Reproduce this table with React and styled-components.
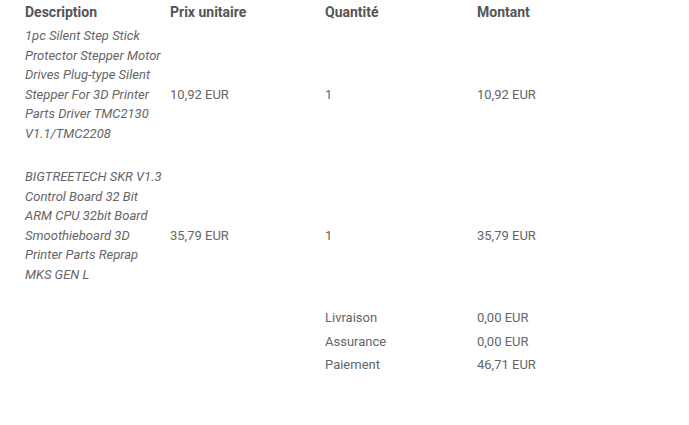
import React from 'react'
import styled, { createGlobalStyle } from 'styled-components'

const GlobalStyle = createGlobalStyle`
    body {
        margin: 0;
        background: #fff;
        font-family: Roboto, 'Liberation Sans', sans-serif;
    }
`

const items = [
    {
        description: '1pc Silent Step Stick Protector Stepper Motor Drives Plug-type Silent Stepper For 3D Printer Parts Driver TMC2130 V1.1/TMC2208',
        price: '10,92 EUR',
        qty: '1',
        total: '10,92 EUR',
    },
    {
        description: 'BIGTREETECH SKR V1.3 Control Board 32 Bit ARM CPU 32bit Board Smoothieboard 3D Printer Parts Reprap MKS GEN L',
        price: '35,79 EUR',
        qty: '1',
        total: '35,79 EUR',
    },
]

const totals = [
    { label: 'Livraison', value: '0,00 EUR' },
    { label: 'Assurance', value: '0,00 EUR' },
    { label: 'Paiement', value: '46,71 EUR' },
]

export default function App() {
    return (
        <>
            <GlobalStyle />
            <Wrapper>
                <Table>
                    <colgroup>
                        <col style={{ width: 145 }} />
                        <col style={{ width: 155 }} />
                        <col style={{ width: 152 }} />
                        <col />
                    </colgroup>
                    <thead>
                        <tr>
                            <Head>Description</Head>
                            <Head>Prix unitaire</Head>
                            <Head>Quantité</Head>
                            <Head>Montant</Head>
                        </tr>
                    </thead>
                    <tbody>
                        {items.map((item, i) => (
                            <tr key={i}>
                                <Cell>
                                    <Description>{item.description}</Description>
                                </Cell>
                                <Cell>{item.price}</Cell>
                                <Cell>{item.qty}</Cell>
                                <Cell>{item.total}</Cell>
                            </tr>
                        ))}
                        {totals.map((t) => (
                            <tr key={t.label}>
                                <Cell />
                                <Cell />
                                <Cell>{t.label}</Cell>
                                <Cell>{t.value}</Cell>
                            </tr>
                        ))}
                    </tbody>
                </Table>
            </Wrapper>
        </>
    )
}

const Wrapper = styled.div`
    padding: 0 25px;
    width: 689px;
    box-sizing: border-box;
`

const Table = styled.table`
    width: 100%;
    border-collapse: collapse;
    table-layout: fixed;
    color: #666;
`

const Head = styled.th`
    text-align: left;
    font-size: 14px;
    font-weight: bold;
    line-height: 20px;
    color: #555;
    padding: 2px 0;
`

const Cell = styled.td`
    font-size: 13px;
    line-height: 19.5px;
    padding: 2px 0;
    vertical-align: middle;
`

const Description = styled.p`
    margin: 0 0 20px;
    padding-right: 6px;
    font-style: italic;
`
